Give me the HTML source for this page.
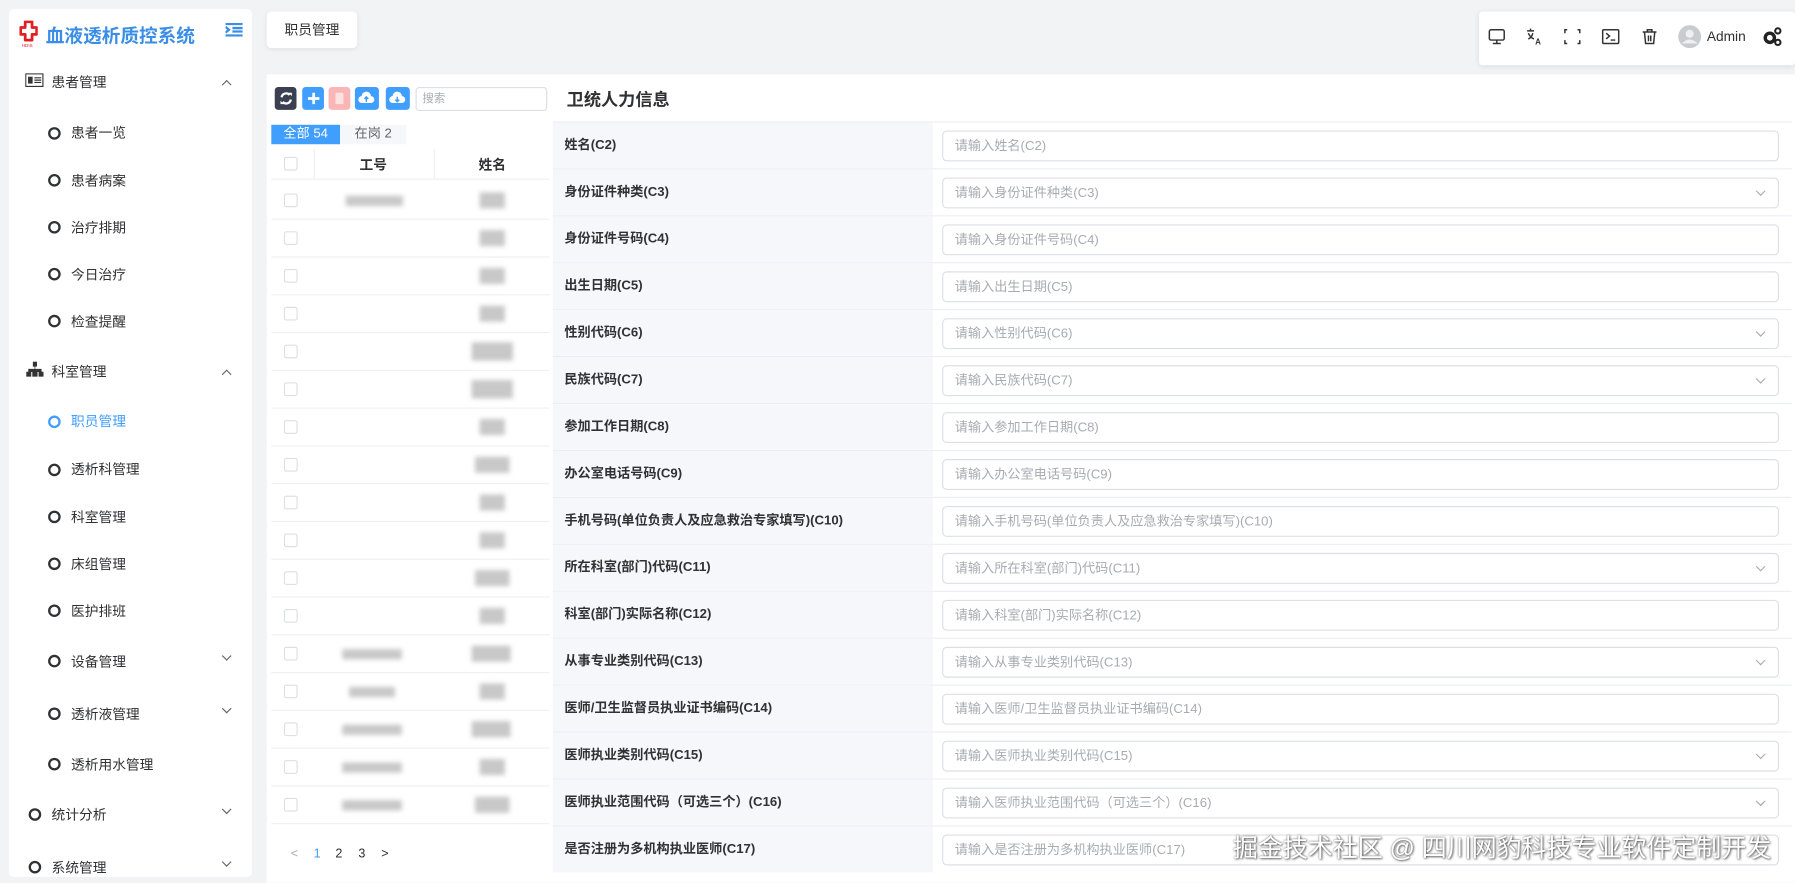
<!DOCTYPE html>
<html><head><meta charset="utf-8">
<style>
*{box-sizing:border-box;margin:0;padding:0}
html,body{width:1795px;height:883px;overflow:hidden;background:#f2f3f5}
#s{position:absolute;left:0;top:0;width:1568px;height:771px;transform:scale(1.14477);transform-origin:0 0;font-family:"Liberation Sans","Noto Sans CJK SC",sans-serif;color:#303133;font-size:12px}
.a{position:absolute}
.side{left:8px;top:8px;width:212px;height:758px;background:#fff;border-radius:4px}
.mi{position:absolute;font-size:12px;color:#303133}
.circ{position:absolute;width:11px;height:11px;border:2px solid #303133;border-radius:50%;margin-top:3px}
.chev{position:absolute;width:6px;height:6px;border-left:1px solid #666;border-top:1px solid #666}
.up{transform:rotate(45deg)}
.dn{transform:rotate(225deg)}
.btn{position:absolute;top:76px;width:19px;height:20px;border-radius:3px}
.row{position:absolute;left:483px;width:1082px;height:41px;border-bottom:1px solid #ebeef5}
.lab{position:absolute;left:0;top:0;width:332px;height:40px;background:#f5f7fa;font-weight:bold;font-size:11.5px;line-height:40px;padding-left:10px}
.inp{position:absolute;left:340px;top:7px;width:731px;height:27px;border:1px solid #dcdfe6;border-radius:4px;color:#a8abb2;font-size:11.5px;line-height:26px;padding-left:10px;background:#fff}
.sel:after{content:"";position:absolute;right:12px;top:8px;width:5px;height:5px;border-right:1px solid #a8abb2;border-bottom:1px solid #a8abb2;transform:rotate(45deg)}
.tr{position:absolute;left:237px;width:243px;height:33px;border-bottom:1px solid #f0f0f0}
.cb{position:absolute;left:11px;top:10px;width:12px;height:12px;border:1px solid #dcdfe6;border-radius:2px;background:#fff}
.bl{position:absolute;background:#c8c8c8;filter:blur(2px);height:9px}
</style></head><body><div id="s">
<div class="a side">
 <svg class="a" style="left:9px;top:10px" width="16" height="24" viewBox="0 0 16 24"><path d="M5 1h6v5h4v6h-4v5H5v-5H1V6h4z" fill="none" stroke="#e02020" stroke-width="2.4" stroke-linejoin="round"/><text x="2" y="23" font-size="4" fill="#e02020">HDIS</text></svg>
 <div class="a" style="left:32px;top:10px;font-size:16.3px;font-weight:bold;color:#3a8ee6">血液透析质控系统</div>
 <svg class="a" style="left:189px;top:12px" width="15" height="12"><path d="M0 1h15M6 4.5h9M6 7.5h9M0 11h15M0 3.5l3 2.5-3 2.5" stroke="#3a8ee6" stroke-width="2" fill="none"/></svg>
 <svg class="a" style="left:14px;top:56px" width="16" height="12"><rect x="0.5" y="0.5" width="15" height="11" fill="none" stroke="#333"/><rect x="2.5" y="3" width="4" height="6" fill="#333"/><path d="M8 4h6M8 6h6M8 8h6" stroke="#333"/></svg>
 <div class="mi" style="left:37px;top:55px">患者管理</div><div class="chev up" style="left:187px;top:63px"></div>
 <div class="circ" style="left:34px;top:100px"></div><div class="mi" style="left:54px;top:99px">患者一览</div>
 <div class="circ" style="left:34px;top:141px"></div><div class="mi" style="left:54px;top:141px">患者病案</div>
 <div class="circ" style="left:34px;top:182px"></div><div class="mi" style="left:54px;top:182px">治疗排期</div>
 <div class="circ" style="left:34px;top:223px"></div><div class="mi" style="left:54px;top:223px">今日治疗</div>
 <div class="circ" style="left:34px;top:264px"></div><div class="mi" style="left:54px;top:264px">检查提醒</div>
 <svg class="a" style="left:15px;top:308px" width="15" height="13"><path d="M6 0h3v4H6zM7.5 4v2.5M2 9V6.5h11V9M7.5 6.5V9M0 9h4v4H0zM5.5 9h4v4h-4zM11 9h4v4h-4z" fill="#333" stroke="#333" stroke-width="0.6"/></svg>
 <div class="mi" style="left:37px;top:308px">科室管理</div><div class="chev up" style="left:187px;top:316px"></div>
 <div class="circ" style="left:34px;top:352px;border-color:#409eff"></div><div class="mi" style="left:54px;top:351px;color:#409eff">职员管理</div>
 <div class="circ" style="left:34px;top:394px"></div><div class="mi" style="left:54px;top:393px">透析科管理</div>
 <div class="circ" style="left:34px;top:435px"></div><div class="mi" style="left:54px;top:435px">科室管理</div>
 <div class="circ" style="left:34px;top:476px"></div><div class="mi" style="left:54px;top:476px">床组管理</div>
 <div class="circ" style="left:34px;top:517px"></div><div class="mi" style="left:54px;top:517px">医护排班</div>
 <div class="circ" style="left:34px;top:561px"></div><div class="mi" style="left:54px;top:561px">设备管理</div><div class="chev dn" style="left:187px;top:562px"></div>
 <div class="circ" style="left:34px;top:607px"></div><div class="mi" style="left:54px;top:607px">透析液管理</div><div class="chev dn" style="left:187px;top:608px"></div>
 <div class="circ" style="left:34px;top:651px"></div><div class="mi" style="left:54px;top:651px">透析用水管理</div>
 <div class="circ" style="left:17px;top:695px"></div><div class="mi" style="left:37px;top:695px">统计分析</div><div class="chev dn" style="left:187px;top:696px"></div>
 <div class="circ" style="left:17px;top:741px"></div><div class="mi" style="left:37px;top:741px">系统管理</div><div class="chev dn" style="left:187px;top:742px"></div>
</div>
<div class="a" style="left:233px;top:10px;width:79px;height:32px;background:#fff;border-radius:4px;box-shadow:0 1px 4px rgba(0,0,0,.08);font-size:12px;line-height:32px;text-align:center">职员管理</div>
<div class="a" style="left:1292px;top:10px;width:276px;height:47px;background:#fff;box-shadow:0 1px 5px rgba(0,0,0,.1);border-radius:3px"></div>
<svg class="a" style="left:1300px;top:22px" width="265" height="20">
 <g stroke="#333" fill="none" stroke-width="1.3">
 <rect x="1" y="4" width="13" height="9" rx="1.5"/><path d="M7.5 13v2.5M4 16h7"/>
 <path d="M34 5h6M37 3v2M35 7q2 4 5 5M39 7q-1 4-4 5"/>
 <path d="M69 4h-2v3M78 4h2v3M69 16h-2v-3M78 16h2v-3"/>
 <rect x="100" y="4" width="14" height="12" rx="1"/><path d="M103 7l3 2.5-3 2.5M107 13h4"/>
 <path d="M135 6h12M139 6V4h4v2M136.5 6l1 10h7l1-10M140 9v5M142 9v5"/>
 </g>
 <text x="41" y="17" font-size="7" font-weight="bold" fill="#333" font-family="Liberation Sans">A</text>
 <circle cx="176" cy="10" r="10" fill="#c8cbd0"/><circle cx="176" cy="7.5" r="3.5" fill="#eef0f2"/><path d="M169 16q7-7 14 0" fill="#eef0f2"/>
 <text x="191" y="14" font-size="12" fill="#303133" font-family="Liberation Sans">Admin</text>
 <circle cx="246" cy="11" r="4" fill="none" stroke="#222" stroke-width="3"/><circle cx="253" cy="5" r="2.3" fill="none" stroke="#222" stroke-width="1.8"/><circle cx="253" cy="15" r="2.3" fill="none" stroke="#222" stroke-width="1.8"/>
</svg>
<div class="a" style="left:233px;top:65px;width:1335px;height:706px;background:#fff"></div>
<div class="btn" style="left:240px;background:#3a3f51"></div>
<svg class="a" style="left:243px;top:79px" width="14" height="14"><path d="M3 6a4 4 0 0 1 7-2M11 8a4 4 0 0 1-7 2" stroke="#fff" stroke-width="2" fill="none"/><path d="M9 2l3 0 0 3zM5 12l-3 0 0-3z" fill="#fff"/></svg>
<div class="btn" style="left:264px;background:#409eff"></div>
<svg class="a" style="left:267px;top:79px" width="14" height="14"><path d="M7 2v10M2 7h10" stroke="#fff" stroke-width="2.4"/></svg>
<div class="btn" style="left:287px;background:#fab6b6"></div>
<div class="a" style="left:293px;top:81px;width:7px;height:10px;background:#fde2e2;border-radius:1px"></div>
<div class="btn" style="left:310px;width:21px;background:#409eff"></div>
<div class="btn" style="left:337px;width:21px;background:#409eff"></div>
<svg class="a" style="left:312px;top:79px" width="46" height="14"><path d="M4 11a3 3 0 0 1 0-6 4 4 0 0 1 8 0 3 3 0 0 1 0 6z" fill="#fff"/><path d="M8 10V6M6.3 7.5L8 5.6 9.7 7.5" stroke="#409eff" stroke-width="1.3" fill="none"/><path d="M31 11a3 3 0 0 1 0-6 4 4 0 0 1 8 0 3 3 0 0 1 0 6z" fill="#fff"/><path d="M35 5.5v4M33.3 8L35 9.9 36.7 8" stroke="#409eff" stroke-width="1.3" fill="none"/></svg>
<div class="a" style="left:363px;top:76px;width:115px;height:21px;border:1px solid #dcdfe6;border-radius:3px;font-size:10px;color:#a8abb2;line-height:19px;padding-left:5px">搜索</div>
<div class="a" style="left:237px;top:109px;width:60px;height:17px;background:#409eff;color:#fff;font-size:11.5px;line-height:17px;text-align:center">全部 54</div>
<div class="a" style="left:297px;top:109px;width:58px;height:17px;background:#f5f7fa;color:#606266;font-size:11.5px;line-height:17px;text-align:center">在岗 2</div>
<div class="tr" style="top:130px;height:27px"><div class="cb" style="top:7px"></div><div class="a" style="left:37px;top:0;height:27px;border-left:1px solid #f0f0f0"></div><div class="a" style="left:142px;top:0;height:27px;border-left:1px solid #f0f0f0"></div><div class="a" style="left:77px;top:5px;font-weight:bold;font-size:12px">工号</div><div class="a" style="left:181px;top:5px;font-weight:bold;font-size:12px">姓名</div></div>
<div class="tr" style="top:159px"><div class="cb"></div><div class="bl" style="left:65px;top:12px;width:50px"></div><div class="bl" style="left:182px;top:9px;width:22px;height:14px"></div></div>
<div class="tr" style="top:192px"><div class="cb"></div><div class="bl" style="left:182px;top:9px;width:22px;height:14px"></div></div>
<div class="tr" style="top:225px"><div class="cb"></div><div class="bl" style="left:182px;top:9px;width:22px;height:14px"></div></div>
<div class="tr" style="top:258px"><div class="cb"></div><div class="bl" style="left:182px;top:9px;width:22px;height:14px"></div></div>
<div class="tr" style="top:291px"><div class="cb"></div><div class="bl" style="left:175px;top:8px;width:36px;height:16px"></div></div>
<div class="tr" style="top:324px"><div class="cb"></div><div class="bl" style="left:175px;top:8px;width:36px;height:16px"></div></div>
<div class="tr" style="top:357px"><div class="cb"></div><div class="bl" style="left:182px;top:9px;width:22px;height:14px"></div></div>
<div class="tr" style="top:390px"><div class="cb"></div><div class="bl" style="left:178px;top:9px;width:30px;height:14px"></div></div>
<div class="tr" style="top:423px"><div class="cb"></div><div class="bl" style="left:182px;top:9px;width:22px;height:14px"></div></div>
<div class="tr" style="top:456px"><div class="cb"></div><div class="bl" style="left:182px;top:9px;width:22px;height:14px"></div></div>
<div class="tr" style="top:489px"><div class="cb"></div><div class="bl" style="left:178px;top:9px;width:30px;height:14px"></div></div>
<div class="tr" style="top:522px"><div class="cb"></div><div class="bl" style="left:182px;top:9px;width:22px;height:14px"></div></div>
<div class="tr" style="top:555px"><div class="cb"></div><div class="bl" style="left:62px;top:12px;width:52px"></div><div class="bl" style="left:175px;top:9px;width:34px;height:14px"></div></div>
<div class="tr" style="top:588px"><div class="cb"></div><div class="bl" style="left:68px;top:12px;width:40px"></div><div class="bl" style="left:182px;top:9px;width:22px;height:14px"></div></div>
<div class="tr" style="top:621px"><div class="cb"></div><div class="bl" style="left:62px;top:12px;width:52px"></div><div class="bl" style="left:175px;top:9px;width:34px;height:14px"></div></div>
<div class="tr" style="top:654px"><div class="cb"></div><div class="bl" style="left:62px;top:12px;width:52px"></div><div class="bl" style="left:182px;top:9px;width:22px;height:14px"></div></div>
<div class="tr" style="top:687px"><div class="cb"></div><div class="bl" style="left:62px;top:12px;width:52px"></div><div class="bl" style="left:178px;top:9px;width:30px;height:14px"></div></div>
<div class="a" style="left:254px;top:740px;font-size:11px;color:#a8abb2">&lt;</div>
<div class="a" style="left:274px;top:740px;font-size:11px;color:#409eff">1</div>
<div class="a" style="left:293px;top:740px;font-size:11px">2</div>
<div class="a" style="left:313px;top:740px;font-size:11px">3</div>
<div class="a" style="left:333px;top:740px;font-size:11px">&gt;</div>
<div class="a" style="left:495px;top:76px;font-size:15px;font-weight:bold">卫统人力信息</div>
<div class="a" style="left:483px;top:106px;width:1082px;border-top:1px solid #ebeef5"></div>
<div class="row" style="top:107px"><div class="lab">姓名(C2)</div><div class="inp">请输入姓名(C2)</div></div>
<div class="row" style="top:148px"><div class="lab">身份证件种类(C3)</div><div class="inp sel">请输入身份证件种类(C3)</div></div>
<div class="row" style="top:189px"><div class="lab">身份证件号码(C4)</div><div class="inp">请输入身份证件号码(C4)</div></div>
<div class="row" style="top:230px"><div class="lab">出生日期(C5)</div><div class="inp">请输入出生日期(C5)</div></div>
<div class="row" style="top:271px"><div class="lab">性别代码(C6)</div><div class="inp sel">请输入性别代码(C6)</div></div>
<div class="row" style="top:312px"><div class="lab">民族代码(C7)</div><div class="inp sel">请输入民族代码(C7)</div></div>
<div class="row" style="top:353px"><div class="lab">参加工作日期(C8)</div><div class="inp">请输入参加工作日期(C8)</div></div>
<div class="row" style="top:394px"><div class="lab">办公室电话号码(C9)</div><div class="inp">请输入办公室电话号码(C9)</div></div>
<div class="row" style="top:435px"><div class="lab">手机号码(单位负责人及应急救治专家填写)(C10)</div><div class="inp">请输入手机号码(单位负责人及应急救治专家填写)(C10)</div></div>
<div class="row" style="top:476px"><div class="lab">所在科室(部门)代码(C11)</div><div class="inp sel">请输入所在科室(部门)代码(C11)</div></div>
<div class="row" style="top:517px"><div class="lab">科室(部门)实际名称(C12)</div><div class="inp">请输入科室(部门)实际名称(C12)</div></div>
<div class="row" style="top:558px"><div class="lab">从事专业类别代码(C13)</div><div class="inp sel">请输入从事专业类别代码(C13)</div></div>
<div class="row" style="top:599px"><div class="lab">医师/卫生监督员执业证书编码(C14)</div><div class="inp">请输入医师/卫生监督员执业证书编码(C14)</div></div>
<div class="row" style="top:640px"><div class="lab">医师执业类别代码(C15)</div><div class="inp sel">请输入医师执业类别代码(C15)</div></div>
<div class="row" style="top:681px"><div class="lab">医师执业范围代码（可选三个）(C16)</div><div class="inp sel">请输入医师执业范围代码（可选三个）(C16)</div></div>
<div class="row" style="top:722px;border:none"><div class="lab">是否注册为多机构执业医师(C17)</div><div class="inp">请输入是否注册为多机构执业医师(C17)</div></div>
<div class="a" style="left:1077px;top:724px;font-size:21.8px;color:#fff;text-shadow:0 0 2px rgba(0,0,0,.6),1px 1px 2px rgba(0,0,0,.5);white-space:nowrap">掘金技术社区 @ 四川网豹科技专业软件定制开发</div>
</div></body></html>
